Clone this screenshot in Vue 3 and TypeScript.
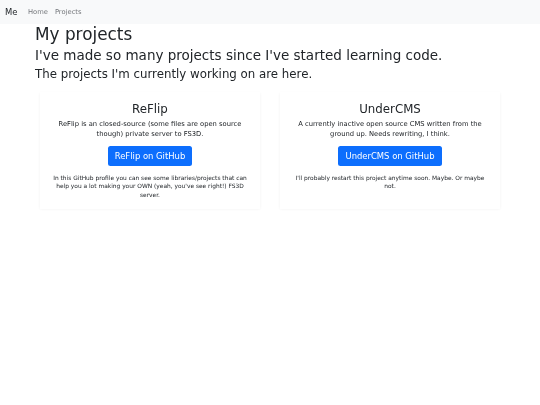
<script setup lang="ts">
interface Project {
  title: string
  description: string
  link: string
  note: string
}

const projects: Project[] = [
  {
    title: 'ReFlip',
    description: 'ReFlip is an closed-source (some files are open source though) private server to FS3D.',
    link: 'ReFlip on GitHub',
    note: "In this GitHub profile you can see some libraries/projects that can help you a lot making your OWN (yeah, you've see right!) FS3D server."
  },
  {
    title: 'UnderCMS',
    description: 'A currently inactive open source CMS written from the ground up. Needs rewriting, I think.',
    link: 'UnderCMS on GitHub',
    note: "I'll probably restart this project anytime soon. Maybe. Or maybe not."
  }
]
</script>

<template>
  <div class="page">
    <nav class="navbar">
      <a class="brand" href="#">Me</a>
      <a class="nav-link" href="#">Home</a>
      <a class="nav-link" href="#">Projects</a>
    </nav>
    <main class="container">
      <h1>My projects</h1>
      <h2>I've made so many projects since I've started learning code.</h2>
      <h3>The projects I'm currently working on are here.</h3>
      <div class="cards">
        <section v-for="p in projects" :key="p.title" class="card">
          <h4>{{ p.title }}</h4>
          <p class="desc">{{ p.description }}</p>
          <a class="btn" href="#">{{ p.link }}</a>
          <p class="note">{{ p.note }}</p>
        </section>
      </div>
    </main>
  </div>
</template>

<style>
html, body { margin: 0; background: #fff; }
</style>

<style scoped>
.page {
  min-height: 405px;
  font-family: "DejaVu Sans", sans-serif;
  color: #212529;
  background: #fff;
  filter: blur(0.4px);
}
.navbar {
  display: flex;
  align-items: center;
  height: 23.5px;
  padding: 0 5px;
  background: #f8f9fa;
}
.brand {
  font-size: 8.44px;
  color: #212529;
  text-decoration: none;
  margin-right: 10.5px;
}
.nav-link {
  font-size: 6.75px;
  color: #75787c;
  text-decoration: none;
  margin-right: 7px;
}
.container {
  padding: 0 35px;
}
h1, h2, h3, h4, p { margin: 0; font-weight: 400; }
h1 {
  font-size: 16.875px;
  line-height: 20px;
}
h2 {
  font-size: 13.5px;
  line-height: 16px;
  margin-top: 3.5px;
}
h3 {
  font-size: 11.8px;
  line-height: 14px;
  margin-top: 3.5px;
}
.cards {
  display: grid;
  grid-template-columns: 220px 220px;
  column-gap: 20px;
  margin: 11.5px 0 0 5px;
}
.card {
  display: flex;
  flex-direction: column;
  align-items: center;
  height: 117px;
  padding: 9.5px 10px 0;
  box-sizing: border-box;
  text-align: center;
  background: #fff;
  box-shadow: 0 1.35px 2.7px rgba(0, 0, 0, 0.06);
}
h4 {
  font-size: 11.8px;
  line-height: 14px;
}
.desc {
  font-size: 6.75px;
  line-height: 10px;
  margin-top: 3.5px;
}
.btn {
  margin-top: 7px;
  padding: 0 7px;
  height: 20px;
  line-height: 20px;
  font-size: 8.44px;
  color: #fff;
  background: #0d6efd;
  border-radius: 2.5px;
  text-decoration: none;
}
.note {
  font-size: 5.9px;
  line-height: 8.9px;
  margin-top: 7.5px;
}
</style>
